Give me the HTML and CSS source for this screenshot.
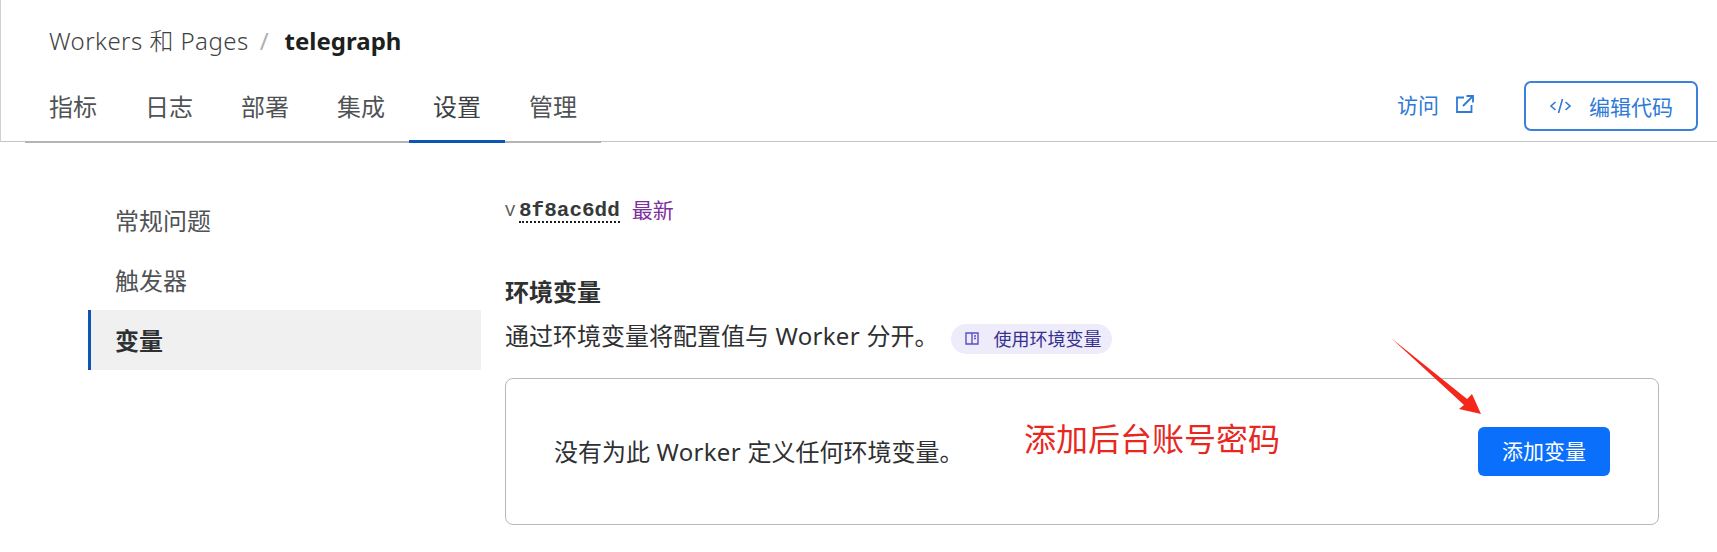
FILE: index.html
```html
<!DOCTYPE html>
<html lang="zh-CN">

<head>
    <meta charset="utf-8">
    <title>telegraph</title>
    <link rel="stylesheet" href="styles.css">
</head>

<body>
    <div class="page">
        <header class="top">
            <div class="crumbs">
                <span class="crumb-link">Workers 和 Pages</span>
                <span class="crumb-sep">/</span>
                <span class="crumb-now">telegraph</span>
            </div>
            <div class="tabbar">
                <nav class="tabs">
                    <span class="tab">指标</span>
                    <span class="tab">日志</span>
                    <span class="tab">部署</span>
                    <span class="tab">集成</span>
                    <span class="tab tab-on">设置</span>
                    <span class="tab">管理</span>
                </nav>
                <div class="actions">
                    <span class="visit">访问
                        <svg class="visit-icon" viewBox="0 0 18 18" fill="none" stroke="currentColor" stroke-width="1.8">
                            <path d="M8 2.500H1v14.500h14.500V10" />
                            <path d="M7 11 17 1M10.500 1H17v6.500" />
                        </svg>
                    </span>
                    <span class="edit-btn">
                        <svg class="edit-icon" viewBox="0 0 21 16" fill="none" stroke="currentColor" stroke-width="1.6">
                            <path d="M5.500 4 1 8l4.500 4M15.500 4 20 8l-4.500 4M12.500 1 8.500 15" />
                        </svg>
                        编辑代码
                    </span>
                </div>
            </div>
        </header>

        <div class="body">
            <aside class="side">
                <div class="side-item">常规问题</div>
                <div class="side-item">触发器</div>
                <div class="side-item side-on">变量</div>
            </aside>

            <main class="main">
                <div class="version">
                    <span class="v">V</span><span class="hash">8f8ac6dd</span>
                    <span class="latest">最新</span>
                </div>

                <h2 class="title">环境变量</h2>
                <div class="desc">
                    <span>通过环境变量将配置值与<span class="latin"> Worker </span>分开。</span>
                    <span class="pill">
                        <svg class="pill-icon" viewBox="0 0 16 13" fill="none" stroke="currentColor" stroke-width="1.400">
                            <path d="M8 1H2v11h6zM8 1h6v11H8M10 4h2M10 6.500h2" />
                        </svg>
                        使用环境变量
                    </span>
                </div>

                <div class="empty">
                    <span>没有为此<span class="latin"> Worker </span>定义任何环境变量。</span>
                    <span class="add-btn">添加变量</span>
                    <span class="note">添加后台账号密码</span>
                </div>
            </main>
        </div>

        <!-- hand drawn arrow on top of the screenshot -->
        <svg class="arrow" viewBox="0 0 100 86">
            <path d="M2 0 78 61 83 56 92 76 70 71 75 67Z" />
        </svg>
    </div>
</body>

</html>
```

FILE: styles.css
```css
* {
    box-sizing: border-box;
}

body {
    margin: 0;
    background-color: #fff;
    color: #2e3031;
    font-family: "Noto Sans", "Noto Sans CJK SC", sans-serif;
    font-size: 24px;
    font-weight: 400;
}

.page {
    position: relative;
    width: 1717px;
    height: 552px;
    overflow: hidden;
}

.latin {
    letter-spacing: 0.3px;
}

.top {
    height: 142px;
    border-bottom: 1px solid #c4c4c4;
    border-left: 1px solid #d0d0d0;
}

.crumbs {
    display: flex;
    align-items: center;
    gap: 9px;
    height: 81px;
    padding-left: 48px;
    line-height: 76px;
    font-size: 24px;
}

.crumb-link {
    color: #3e4143;
    font-weight: 300;
    letter-spacing: 0.45px;
}

.crumb-sep {
    margin-left: 2px;
    color: #b0b0b0;
}

.crumb-now {
    margin-left: 7px;
    color: #1d1f20;
    font-weight: 700;
}

.tabbar {
    display: flex;
    justify-content: space-between;
    height: 62px;
    padding-left: 24px;
    padding-right: 19px;
}

.tabs {
    display: flex;
    height: 62px;
    border-bottom: 2px solid #b4b4b4;
}

.tab {
    width: 96px;
    height: 62px;
    padding-top: 9px;
    line-height: 34px;
    text-align: center;
    color: #505356;
}

.tab-on {
    border-bottom: 3px solid #0b55b5;
    color: #3e4143;
}

.actions {
    display: flex;
    align-items: flex-start;
    gap: 50px;
}

.visit {
    display: flex;
    align-items: center;
    gap: 17px;
    height: 46px;
    font-size: 21px;
    color: #2f7ad6;
}

.visit-icon {
    width: 18px;
    height: 18px;
}

.edit-btn {
    display: flex;
    align-items: center;
    gap: 18px;
    width: 174px;
    height: 50px;
    padding-left: 24px;
    border: 2px solid #3b80da;
    border-radius: 7px;
    font-size: 21px;
    color: #2f7ad6;
}

.edit-icon {
    width: 21px;
    height: 16px;
}

.body {
    display: flex;
    gap: 24px;
    padding-left: 88px;
}

.side {
    width: 393px;
    margin-top: 48px;
}

.side-item {
    height: 60px;
    padding-left: 27px;
    line-height: 62px;
    color: #505356;
}

.side-on {
    border-left: 3px solid #0b55b5;
    padding-left: 24px;
    background-color: #f0f0f0;
    color: #2e3031;
    font-weight: 700;
}

.main {
    width: 1154px;
    padding-top: 54px;
}

.version {
    display: flex;
    align-items: flex-start;
    height: 32px;
    font-size: 21px;
}

.v {
    width: 14px;
    line-height: 32px;
    font-family: "Liberation Mono", monospace;
    font-size: 17px;
    color: #55585a;
}

.hash {
    height: 27px;
    border-bottom: 2px dotted #1d1f20;
    line-height: 29px;
    font-family: "Liberation Mono", monospace;
    font-weight: 700;
    color: #36393a;
}

.latest {
    margin-left: 12px;
    line-height: 28px;
    color: #7d2f9e;
}

.title {
    margin: 48px 0 0;
    height: 32px;
    line-height: 32px;
    font-size: 24px;
    font-weight: 700;
}

.desc {
    display: flex;
    align-items: center;
    gap: 13px;
    height: 36px;
    margin-top: 10px;
    line-height: 36px;
}

.pill {
    display: flex;
    align-items: center;
    gap: 13px;
    height: 30px;
    margin-top: 5px;
    padding-left: 13px;
    padding-right: 11px;
    border-radius: 15px;
    background-color: #eeebfa;
    font-size: 18px;
    color: #36318f;
}

.pill-icon {
    width: 16px;
    height: 13px;
    color: #5a50c8;
}

.empty {
    position: relative;
    display: flex;
    align-items: center;
    justify-content: space-between;
    height: 147px;
    margin-top: 24px;
    padding-left: 48px;
    padding-right: 48px;
    padding-bottom: 3px;
    border: 1px solid #b8b8b8;
    border-radius: 8px;
}

.add-btn {
    width: 132px;
    height: 49px;
    margin-top: 3px;
    border-radius: 6px;
    background-color: #0a6ffa;
    line-height: 48px;
    text-align: center;
    font-size: 21px;
    color: #fff;
}

/* annotations drawn over the screenshot */
.note {
    position: absolute;
    left: 518px;
    top: 36px;
    line-height: 48px;
    font-size: 32px;
    color: #e8281f;
}

.arrow {
    position: absolute;
    left: 1389px;
    top: 338px;
    width: 100px;
    height: 86px;
    fill: #f5271b;
}
```
